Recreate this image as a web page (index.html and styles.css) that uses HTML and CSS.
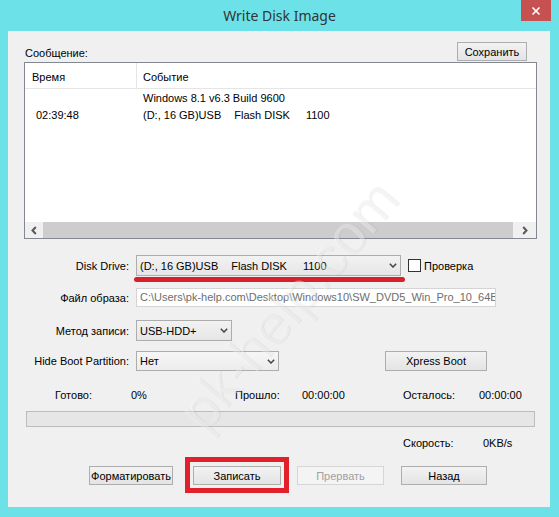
FILE: index.html
```html
<!DOCTYPE html>
<html>
<head>
<meta charset="utf-8">
<title>Write Disk Image</title>
<link rel="stylesheet" href="styles.css">
</head>
<body>
<div class="window">
  <div class="titlebar">
    <div class="spacer"></div>
    <div class="title">Write Disk Image</div>
    <div class="close">
      <svg width="10" height="10" viewBox="0 0 10 10"><path d="M1.5 1.5 L8.5 8.5 M8.5 1.5 L1.5 8.5" stroke="#fff" stroke-width="1.6" fill="none"/></svg>
    </div>
  </div>
  <div class="client">
    <div class="msg-head">
      <span class="msg-label">Сообщение:</span>
      <button class="btn save">Сохранить</button>
    </div>
    <div class="listbox">
      <div class="list-head">
        <div class="hc1">Время</div>
        <div class="hc2">Событие</div>
      </div>
      <div class="list-body">
        <div class="row"><div class="c1"></div><div class="c2">Windows 8.1 v6.3 Build 9600</div></div>
        <div class="row"><div class="c1 time">02:39:48</div><div class="c2">(D:, 16 GB)USB<span class="g1">Flash DISK</span><span class="g2">1100</span></div></div>
      </div>
      <div class="hscroll">
        <div class="sarrow sleft"><svg width="6" height="9" viewBox="0 0 6 9"><polyline points="4.8,1 1.5,4.5 4.8,8" stroke="#5a5a5a" stroke-width="2" fill="none"/></svg></div>
        <div class="thumb"></div>
        <div class="sarrow sright"><svg width="6" height="9" viewBox="0 0 6 9"><polyline points="1.2,1 4.5,4.5 1.2,8" stroke="#5a5a5a" stroke-width="2" fill="none"/></svg></div>
      </div>
    </div>

    <div class="form-row r1">
      <div class="lbl">Disk Drive:</div>
      <div class="combo c-drive">
        <span>(D:, 16 GB)USB<span class="g1">Flash DISK</span><span class="g2">1100</span></span>
        <svg class="chev" width="8" height="5" viewBox="0 0 8 5"><polyline points="0.8,0.8 4,4 7.2,0.8" stroke="#444" stroke-width="1.5" fill="none"/></svg>
        <div class="underline"></div>
      </div>
      <div class="check"></div>
      <span class="check-lbl">Проверка</span>
    </div>

    <div class="form-row r2">
      <div class="lbl">Файл образа:</div>
      <div class="textbox">C:\Users\pk-help.com\Desktop\Windows10\SW_DVD5_Win_Pro_10_64BIT_Russian.iso</div>
    </div>

    <div class="form-row r3">
      <div class="lbl">Метод записи:</div>
      <div class="combo c-method">
        <span>USB-HDD+</span>
        <svg class="chev" width="8" height="5" viewBox="0 0 8 5"><polyline points="0.8,0.8 4,4 7.2,0.8" stroke="#444" stroke-width="1.5" fill="none"/></svg>
      </div>
    </div>

    <div class="form-row r4">
      <div class="lbl">Hide Boot Partition:</div>
      <div class="combo c-hide">
        <span>Нет</span>
        <svg class="chev" width="8" height="5" viewBox="0 0 8 5"><polyline points="0.8,0.8 4,4 7.2,0.8" stroke="#444" stroke-width="1.5" fill="none"/></svg>
      </div>
      <button class="btn xpress">Xpress Boot</button>
    </div>

    <div class="stats">
      <span>Готово:</span><span>0%</span><span>Прошло:</span><span>00:00:00</span><span>Осталось:</span><span>00:00:00</span>
    </div>
    <div class="progress"></div>
    <div class="speed"><span>Скорость:</span><span>0KB/s</span></div>

    <div class="buttons">
      <button class="btn b-format">Форматировать</button>
      <div class="hl"><button class="btn b-write">Записать</button></div>
      <button class="btn b-abort disabled">Прервать</button>
      <button class="btn b-back">Назад</button>
    </div>
  </div>
  <div class="wm wm-b">pk-help.com</div>
</div>
</body>
</html>
```

FILE: styles.css
```css
body {
  margin: 0;
  font-family: "Liberation Sans", Arial, sans-serif;
  font-size: 11px;
  color: #000;
}

.window {
  width: 559px;
  height: 517px;
  background: #6ce2e8;
  position: relative;
  overflow: hidden;
  display: flex;
  flex-direction: column;
}

.titlebar {
  height: 31px;
  display: flex;
  padding: 0 8px;
  flex-shrink: 0;
}

.spacer {
  width: 30px;
}

.title {
  flex: 1;
  text-align: center;
  font-family: "Noto Sans", "Open Sans", sans-serif;
  font-size: 14px;
  line-height: 31px;
  color: #333;
}

.close {
  width: 30px;
  height: 21px;
  background: #c75050;
  display: flex;
  align-items: center;
  justify-content: center;
}

.client {
  margin: 0 9px 10px 8px;
  height: 476px;
  background: #f0f0f0;
  display: flex;
  flex-direction: column;
}

.msg-head {
  display: flex;
  align-items: flex-end;
  justify-content: space-between;
  margin-top: 11px;
  padding: 0 23px 0 17px;
  height: 19px;
}

.msg-label {
  line-height: 13px;
  padding-bottom: 1px;
}

.btn {
  font-family: "Liberation Sans", Arial, sans-serif;
  font-size: 11px;
  color: #000;
  height: 19px;
  padding: 0;
  margin: 0;
  border: 1px solid #adadad;
  background: linear-gradient(#f2f2f2, #e4e4e4);
  box-sizing: border-box;
}

.save {
  width: 70px;
}

.listbox {
  margin: 1px 0 0 16px;
  width: 513px;
  height: 177px;
  border: 1px solid #828790;
  background: #fff;
  box-sizing: border-box;
  display: flex;
  flex-direction: column;
}

.list-head {
  height: 26px;
  border-bottom: 1px solid #e5e5e5;
  box-sizing: border-box;
  display: flex;
}

.hc1 {
  width: 112px;
  border-right: 1px solid #e5e5e5;
  box-sizing: border-box;
  padding: 3px 0 0 7px;
  line-height: 22px;
}

.hc2 {
  padding: 3px 0 0 6px;
  line-height: 22px;
}

.list-body {
  padding-top: 1px;
}

.row {
  display: flex;
  line-height: 17px;
  height: 17px;
}

.c1 {
  width: 112px;
  flex-shrink: 0;
}

.c1.time {
  padding-left: 11px;
  box-sizing: border-box;
}

.c2 {
  padding-left: 6px;
  white-space: nowrap;
}

.g1 {
  margin-left: 13px;
}

.g2 {
  margin-left: 16px;
}

.hscroll {
  margin-top: auto;
  height: 16px;
  display: flex;
  background: #f0f0f0;
}

.sarrow {
  display: flex;
  align-items: center;
  justify-content: center;
}

.sleft {
  width: 18px;
}

.sright {
  width: 23px;
}

.thumb {
  flex: 1;
  background: #cdcdcd;
}

.form-row {
  display: flex;
  align-items: center;
}

.lbl {
  width: 121px;
  margin-right: 7px;
  text-align: right;
  white-space: nowrap;
}

.r1 {
  margin-top: 16px;
  height: 21px;
}

.r2 {
  margin-top: 12px;
  height: 19px;
}

.r3 {
  margin-top: 13px;
  height: 21px;
}

.r4 {
  margin-top: 10px;
  height: 20px;
}

.combo {
  height: 100%;
  border: 1px solid #adadad;
  background: linear-gradient(#f2f2f2, #e6e6e6);
  box-sizing: border-box;
  display: flex;
  align-items: center;
  padding-left: 3px;
  position: relative;
  white-space: nowrap;
}

.chev {
  margin-left: auto;
  margin-right: 3px;
}

.c-drive {
  width: 265px;
}

.c-method {
  width: 96px;
}

.c-hide {
  width: 143px;
  background: linear-gradient(#f6f6f6, #ececec);
}

.underline {
  position: absolute;
  left: -3px;
  top: 21px;
  width: 271px;
  height: 5px;
  border-radius: 3px;
  background: #d7202b;
}

.check {
  width: 13px;
  height: 13px;
  border: 1px solid #333;
  background: #fff;
  box-sizing: border-box;
  margin-left: 7px;
}

.check-lbl {
  margin-left: 3px;
}

.textbox {
  width: 360px;
  height: 100%;
  border: 1px solid #d4d4d4;
  background: #fff;
  box-sizing: border-box;
  color: #6d6d6d;
  padding-left: 3px;
  line-height: 17px;
  overflow: hidden;
  white-space: nowrap;
}

.xpress {
  margin-left: 106px;
  width: 102px;
  height: 20px;
}

.stats {
  margin-top: 17px;
  height: 14px;
  line-height: 14px;
  padding-left: 47px;
  display: grid;
  grid-template-columns: 76px 104px 67px 101px 76px auto;
}

.progress {
  margin: 9px 0 0 18px;
  width: 509px;
  height: 16px;
  border: 1px solid #bcbcbc;
  background: #e6e6e6;
  box-sizing: border-box;
}

.speed {
  margin-top: 9px;
  height: 14px;
  line-height: 14px;
  padding-left: 395px;
  display: grid;
  grid-template-columns: 80px auto;
}

.buttons {
  margin-top: 16px;
  padding-left: 81px;
  display: flex;
  height: 19px;
}

.b-format {
  width: 84px;
}

.hl {
  position: relative;
  margin-left: 20px;
  display: flex;
}

.hl::after {
  content: "";
  position: absolute;
  left: -8px;
  top: -9px;
  width: 104px;
  height: 36px;
  border: 5px solid #e2202c;
  box-sizing: border-box;
}

.b-write {
  width: 88px;
}

.b-abort {
  margin-left: 16px;
  width: 87px;
}

.btn.disabled {
  color: #a0a0a0;
  border-color: #d6d6d6;
  background: #f4f4f4;
}

.b-back {
  margin-left: 17px;
  width: 86px;
}

.wm {
  position: absolute;
  font-family: "Liberation Sans", Arial, sans-serif;
  font-size: 56px;
  color: rgba(255, 255, 255, 0.35);
  text-shadow: 1px 1px 1px rgba(120, 120, 120, 0.12);
  white-space: nowrap;
  pointer-events: none;
  transform: translate(-50%, -50%) rotate(-50deg);
}

.wm-b {
  left: 288px;
  top: 305px;
}
```
